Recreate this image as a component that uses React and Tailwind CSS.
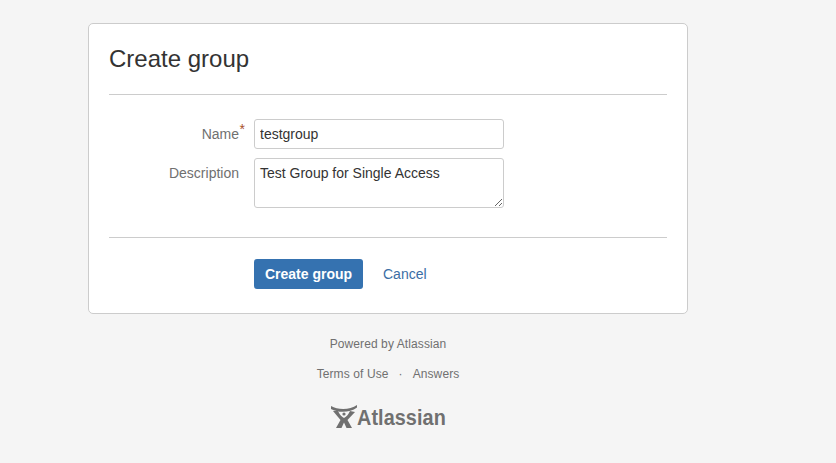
const font = "font-['Liberation_Sans',Arial,sans-serif]"

function AtlassianLogo() {
  return (
    <div className="flex items-end justify-center">
      <svg viewBox="0 0 26 23" className="h-[23px] w-[26px] shrink-0 text-[#707070]" fill="currentColor">
        <path d="M0 1 C7 5 19 5 26 0 L26 2.5 C19 8 7 8 0 4 Z" />
        <path d="M2 6 L7 6 C9 10 11 12 13 13 C15 12 17 10 19 6 L24 7 L16.5 15 L21 23 L15.5 23 L13 17.5 L10.5 23 L5 23 L9.5 15 Z" />
        <circle cx="13" cy="9" r="1.6" />
      </svg>
      <span className="mr-[-10px] ml-[0px] inline-block origin-left scale-x-[0.9] text-[22px] leading-[20px] font-bold text-[#707070]">
        Atlassian
      </span>
    </div>
  )
}

export default function App() {
  return (
    <div className={`min-h-[463px] bg-[#f5f5f5] pt-[23px] pl-[88px] ${font}`}>
      <div className="w-[600px]">
        <div className="h-[291px] rounded-[5px] border border-[#cccccc] bg-white px-5 pt-[20px]">
          <h1 className="text-[24px] leading-[30px] text-[#333333]">Create group</h1>
          <div className="mt-[20px] border-t border-[#cccccc]" />
          <div className="mt-[24px] flex items-start">
            <label className="relative w-[130px] pt-[5px] text-right text-[14px] leading-[20px] text-[#707070]">
              Name
              <span className="absolute top-[3px] right-[-6px] text-[14px] leading-none text-[#a8502a]">*</span>
            </label>
            <input
              readOnly
              value="testgroup"
              className="ml-[15px] h-[30px] w-[250px] rounded-[3px] border border-[#cccccc] bg-white px-[5px] text-[14px] text-[#333333] outline-none"
            />
          </div>
          <div className="mt-[9px] flex items-start">
            <label className="w-[130px] pt-[5px] text-right text-[14px] leading-[20px] text-[#707070]">Description</label>
            <textarea
              readOnly
              value="Test Group for Single Access"
              className="ml-[15px] h-[50px] w-[250px] rounded-[3px] border border-[#cccccc] bg-white px-[5px] py-[5px] text-[14px] leading-[18px] text-[#333333] outline-none"
            />
          </div>
          <div className="mt-[29px] border-t border-[#cccccc]" />
          <div className="mt-[21px] ml-[145px] flex items-center">
            <button type="button" className="h-[30px] w-[109px] rounded-[3px] bg-[#3572b0] text-[14px] font-bold text-white">
              Create group
            </button>
            <a className="ml-[20px] text-[14px] text-[#3b6ea5]">Cancel</a>
          </div>
        </div>
        <div className="mt-[21px] text-center text-[12px] leading-[18px] tracking-[0.1px] text-[#707070]">
          <p>Powered by Atlassian</p>
          <div className="mt-[12px] flex justify-center gap-[10px]">
            <span>Terms of Use</span>
            <span>·</span>
            <span>Answers</span>
          </div>
          <div className="mt-[22px]">
            <AtlassianLogo />
          </div>
        </div>
      </div>
    </div>
  )
}
